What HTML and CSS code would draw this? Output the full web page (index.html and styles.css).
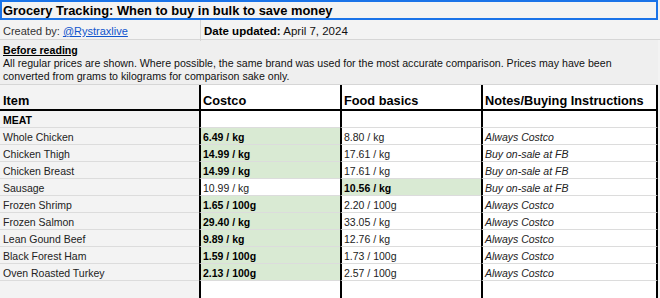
FILE: index.html
```html
<!DOCTYPE html>
<html>
<head>
<meta charset="utf-8">
<link rel="stylesheet" href="styles.css">
</head>
<body>
<div class="sheet">
  <div class="title">Grocery Tracking: When to buy in bulk to save money</div>
  <div class="meta">
    <div class="meta-cell">Created by: <a class="link" href="#">@Rystraxlive</a></div>
    <div class="meta-cell meta-date"><b>Date updated:</b> April 7, 2024</div>
  </div>
  <div class="note">
    <div class="note-head">Before reading</div>
    <div class="note-body">All regular prices are shown. Where possible, the same brand was used for the most accurate comparison. Prices may have been converted from grams to kilograms for comparison sake only.</div>
  </div>
  <div class="grid">
    <div class="c item head">Item</div>
    <div class="c store head">Costco</div>
    <div class="c store head">Food basics</div>
    <div class="c notes head">Notes/Buying Instructions</div>

    <div class="c item cat">MEAT</div>
    <div class="c store"></div>
    <div class="c store"></div>
    <div class="c notes"></div>

    <div class="c item">Whole Chicken</div>
    <div class="c store best">6.49 / kg</div>
    <div class="c store">8.80 / kg</div>
    <div class="c notes">Always Costco</div>

    <div class="c item">Chicken Thigh</div>
    <div class="c store best">14.99 / kg</div>
    <div class="c store">17.61 / kg</div>
    <div class="c notes">Buy on-sale at FB</div>

    <div class="c item">Chicken Breast</div>
    <div class="c store best">14.99 / kg</div>
    <div class="c store">17.61 / kg</div>
    <div class="c notes">Buy on-sale at FB</div>

    <div class="c item">Sausage</div>
    <div class="c store">10.99 / kg</div>
    <div class="c store best">10.56 / kg</div>
    <div class="c notes">Buy on-sale at FB</div>

    <div class="c item">Frozen Shrimp</div>
    <div class="c store best">1.65 / 100g</div>
    <div class="c store">2.20 / 100g</div>
    <div class="c notes">Always Costco</div>

    <div class="c item">Frozen Salmon</div>
    <div class="c store best">29.40 / kg</div>
    <div class="c store">33.05 / kg</div>
    <div class="c notes">Always Costco</div>

    <div class="c item">Lean Gound Beef</div>
    <div class="c store best">9.89 / kg</div>
    <div class="c store">12.76 / kg</div>
    <div class="c notes">Always Costco</div>

    <div class="c item">Black Forest Ham</div>
    <div class="c store best">1.59 / 100g</div>
    <div class="c store">1.73 / 100g</div>
    <div class="c notes">Always Costco</div>

    <div class="c item">Oven Roasted Turkey</div>
    <div class="c store best">2.13 / 100g</div>
    <div class="c store">2.57 / 100g</div>
    <div class="c notes">Always Costco</div>

    <div class="c item empty"></div>
    <div class="c store empty"></div>
    <div class="c store empty"></div>
    <div class="c notes empty"></div>
  </div>
</div>
</body>
</html>
```

FILE: styles.css
```css
* { box-sizing: border-box; }
html, body { margin: 0; padding: 0; background: #ffffff; }
body {
  font-family: "Liberation Sans", Arial, sans-serif;
  font-size: 10.5px;
  color: #222222;
}
.sheet { width: 660px; background: #f3f3f3; }
.title {
  height: 20px;
  width: 658px;
  border: 2px solid #1a73e8;
  background: #f3f3f3;
  font-weight: bold;
  font-size: 12.9px;
  color: #000000;
  line-height: 17px;
  padding-left: 1px;
}
.meta {
  display: grid;
  grid-template-columns: 200px 458px;
  height: 20px;
  border-bottom: 1px solid #d6d6d6;
  background: #f3f3f3;
}
.meta-cell {
  line-height: 19px;
  padding-top: 2px;
  padding-left: 3px;
  font-size: 11px;
  color: #333333;
}
.meta-date { border-left: 1px solid #d6d6d6; font-size: 11.5px; color: #111; }
.meta-date b { color: #000; }
.link { color: #1155cc; text-decoration: underline; }
.note {
  height: 45px;
  background: #efefef;
  border-bottom: 1px solid #d6d6d6;
  padding: 4px 3px 0 3px;
  width: 658px;
  line-height: 13px;
}
.note-head { font-weight: bold; text-decoration: underline; color: #000; font-size: 10.6px; }
.note-body { color: #111; width: 645px; font-size: 10.62px; }
.grid {
  display: grid;
  grid-template-columns: 199px 141px 141px 177px;
  grid-template-rows: 26px;
  grid-auto-rows: 17px;
  background: #ffffff;
  width: 658px;
}
.c {
  border-bottom: 1px solid #dcdcdc;
  line-height: 18px;
  padding-left: 3px;
  white-space: nowrap;
  overflow: hidden;
  color: #222;
}
.item { background: #f3f3f3; }
.store, .notes { border-left: 2px solid #000000; padding-left: 2px; background: #ffffff; }
.notes { border-right: 2px solid #000000; font-style: italic; }
.head {
  height: 26px;
  border-bottom: 2px solid #000000;
  font-weight: bold;
  font-size: 12.75px;
  color: #000;
  line-height: 32px;
  font-style: normal;
}
.cat { font-weight: bold; color: #000; }
.best { background: #d9ead3; font-weight: bold; color: #000; }
.empty { border-bottom: none; }
```
